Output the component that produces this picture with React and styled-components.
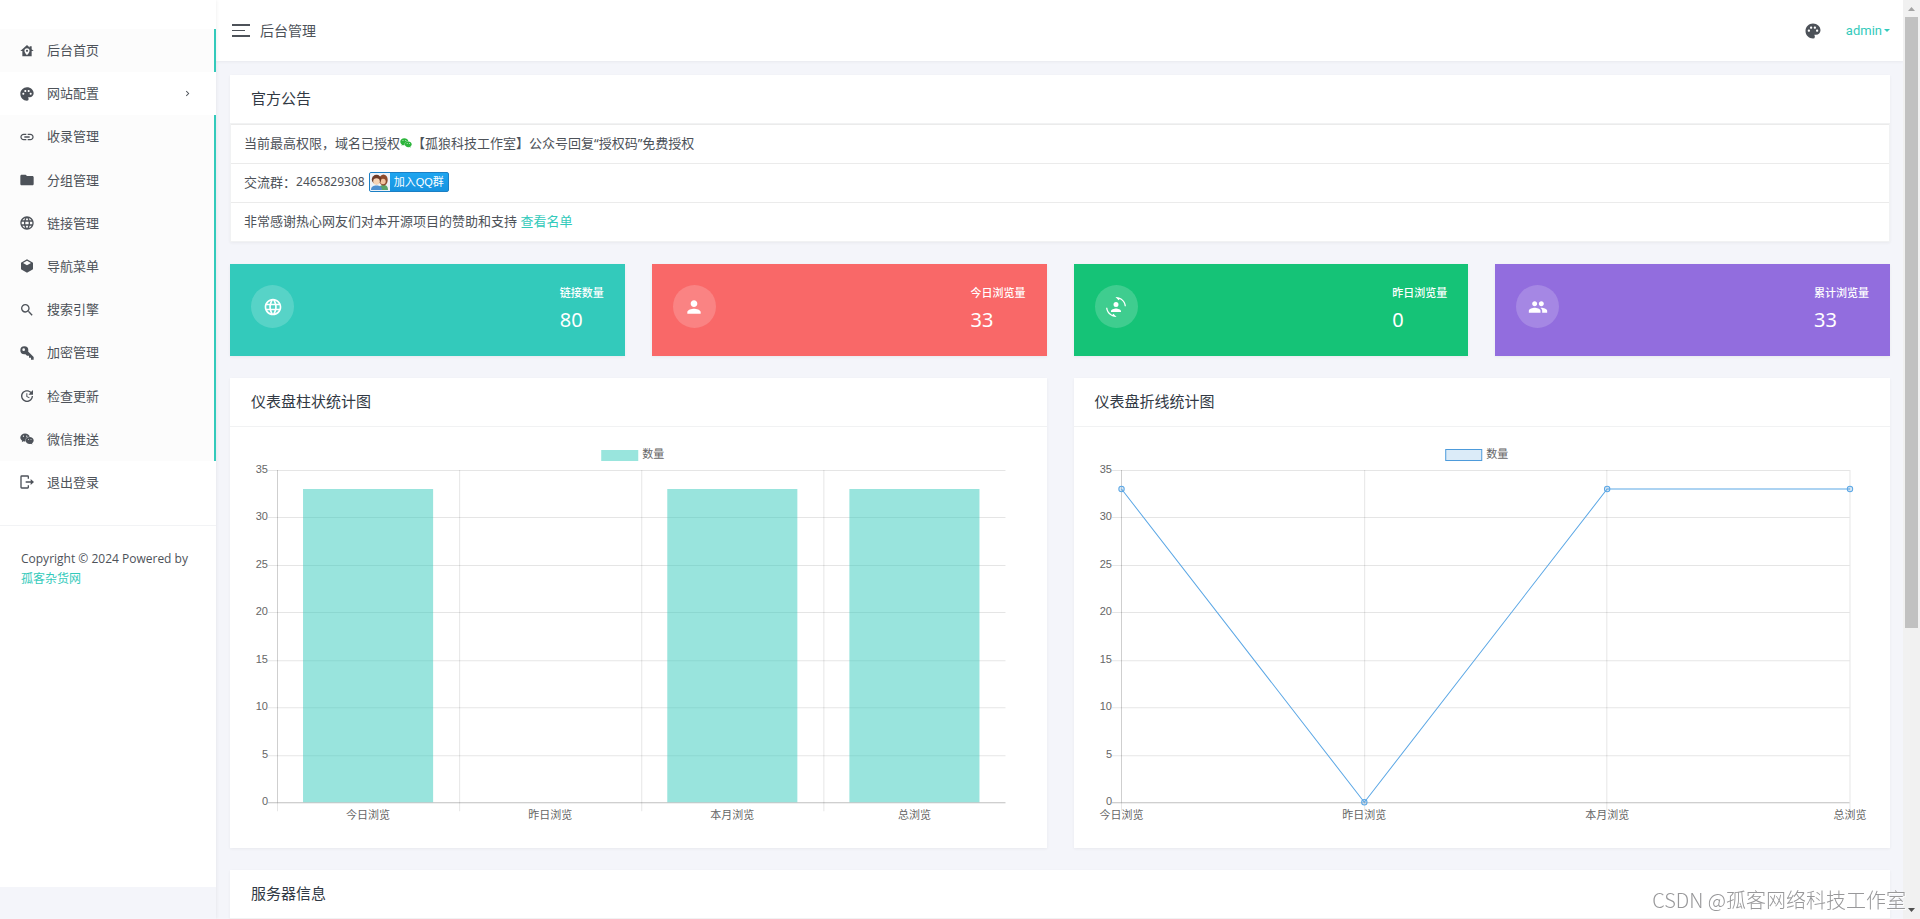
import React from 'react';
import styled, {createGlobalStyle} from 'styled-components';
import {
    MdChevronRight,
    MdFolder,
    MdLanguage,
    MdLink,
    MdPalette,
    MdPeople,
    MdPerson,
    MdSearch,
    MdUpdate
} from 'react-icons/md';
import {FaWeixin} from 'react-icons/fa';

const GlobalStyle = createGlobalStyle`
  * {
    box-sizing: border-box;
  }

  body {
    margin: 0;
    color: #4d5259;
    background-color: #f4f5fa;
    font-family: "Noto Sans", "Noto Sans CJK SC", sans-serif;
    font-size: 13px;
    line-height: 20px;
  }

  a {
    color: #33cabb;
    text-decoration: none;
  }
`

const Page = styled.div`
  display: flex;
  height: 100vh;
  overflow: hidden;
`

const Sidebar = styled.aside`
  display: flex;
  flex: none;
  width: 216px;
  padding-bottom: 32px;
  box-shadow: 0 0 4px rgba(0, 0, 0, 0.08);
  z-index: 2;
`

const SidebarInner = styled.div`
  flex: 1;
  padding-top: 29px;
  background-color: #fff;
`

const MenuList = styled.ul`
  display: grid;
  grid-auto-rows: 1fr;
  min-height: 475px;
  margin: 0;
  padding: 0;
  list-style: none;
`

const MenuLink = styled.a`
  display: flex;
  align-items: center;
  gap: 12px;
  height: 100%;
  padding: 0 21px 0 19px;
  color: #4d5259;
  background-color: ${({$active}) => $active ? '#fcfcfc' : '#fff'};
  border-right: 2px solid ${({$active}) => $active ? '#33cabb' : 'transparent'};
`

const MenuIcon = styled.span`
  display: flex;
  flex: none;
  justify-content: center;
  width: 16px;
`

const MenuText = styled.span`
  flex: 1;
  padding-bottom: 1px;
`

const Copyright = styled.p`
  margin: 21px 0 0;
  padding: 23px 21px;
  border-top: 1px solid #f2f3f5;
  font-family: "Open Sans", "Noto Sans CJK SC", sans-serif;
  font-size: 12px;
`

const Main = styled.div`
  display: flex;
  flex: 1;
  flex-direction: column;
  min-width: 0;
`

const Header = styled.header`
  display: flex;
  flex: none;
  align-items: center;
  gap: 10px;
  height: 61px;
  padding: 0 13px 0 16px;
  background-color: #fff;
  box-shadow: 0 1px 3px rgba(0, 0, 0, 0.05);
`

const Toggler = styled.button`
  display: flex;
  flex-direction: column;
  justify-content: space-between;
  width: 18px;
  height: 13px;
  padding: 0;
  border: 0;
  background: none;
`

const TogglerBar = styled.span`
  width: ${({$short}) => $short ? '13px' : '18px'};
  height: ${({$short}) => $short ? '1px' : '2px'};
  background-color: #4d5259;
`

const HeaderTitle = styled.span`
  flex: 1;
  font-size: 14px;
`

const SkinButton = styled.button`
  display: flex;
  padding: 0;
  border: 0;
  margin-right: 14px;
  color: #4d5259;
  background: none;
`

const UserLink = styled.a`
  display: flex;
  align-items: center;
  gap: 2px;
  font-family: Roboto, sans-serif;

  &::after {
    content: '';
    border-top: 3px solid;
    border-left: 3px solid transparent;
    border-right: 3px solid transparent;
  }
`

const Content = styled.main`
  display: flex;
  flex-direction: column;
  gap: 22px;
  padding: 14px 13px 0 14px;
`

const Card = styled.section`
  background-color: #fff;
  box-shadow: 0 1px 3px rgba(0, 0, 0, 0.05);
`

const CardTitle = styled.h4`
  margin: 0;
  padding: 13px 21px 15px;
  border-bottom: 1px solid #f1f2f3;
  color: #313944;
  font-size: 15px;
  font-weight: 400;
`

const Notices = styled.ul`
  margin: 0;
  padding: 0;
  border: 1px solid #f1f2f3;
  border-width: 0 1px 1px;
  list-style: none;
`

const Notice = styled.li`
  display: flex;
  align-items: center;
  height: 39px;
  padding: 0 13px 2px;
  border-top: 1px solid #ebebeb;
  white-space: pre;
`

const GroupNumber = styled.span`
  font-size: 12px;
`

const QQLink = styled.a`
  display: flex;
  align-items: center;
  height: 20px;
  margin-left: 4px;
  padding-right: 4px;
  gap: 4px;
  overflow: hidden;
  border: 1px solid #1b7fc4;
  border-radius: 2px;
  color: #fff;
  background: linear-gradient(#1ea5f0, #1793e0);
  font-family: "Liberation Sans", "Noto Sans CJK SC", sans-serif;
  font-size: 11px;
`

const Stats = styled.div`
  display: grid;
  grid-template-columns: repeat(4, 1fr);
  gap: 27px;
`

const StatCard = styled.div`
  display: flex;
  align-items: center;
  justify-content: space-between;
  height: 92px;
  padding: 0 21px 7px;
  color: #fff;
  background-color: ${({$color}) => $color};
  box-shadow: 0 1px 3px rgba(0, 0, 0, 0.05);
`

const StatIcon = styled.span`
  display: flex;
  align-items: center;
  justify-content: center;
  width: 43px;
  height: 43px;
  border-radius: 50%;
  background-color: rgba(255, 255, 255, 0.18);
`

const StatText = styled.div`
  padding-top: 3px;
`

const StatLabel = styled.p`
  margin: 0;
  font-size: 11px;
  font-weight: 500;
`

const StatValue = styled.p`
  margin: 0;
  padding-top: 3px;
  font-size: 20px;
  line-height: 28px;
`

const Charts = styled.div`
  display: grid;
  grid-template-columns: repeat(2, 1fr);
  gap: 27px;
`

const ChartBody = styled.div`
  padding: 17px 21px;
`

const ChartSvg = styled.svg`
  display: block;
  width: 100%;
  height: auto;
  overflow: visible;
  fill: #666;
  font-family: "Liberation Sans", "Noto Sans CJK SC", sans-serif;
  font-size: 11px;
`

const ScrollBar = styled.div`
  display: flex;
  flex: none;
  flex-direction: column;
  align-items: center;
  width: 17px;
  background-color: #f1f1f1;
`

const ScrollArrow = styled.svg`
  display: block;
  flex: none;
  width: 17px;
  height: 17px;
`

const ScrollTrack = styled.div`
  flex: 1;
`

const ScrollThumb = styled.div`
  width: 13px;
  height: 69%;
  background-color: #c1c1c1;
`

const Watermark = styled.div`
  position: fixed;
  right: 14px;
  bottom: 4px;
  color: #98989a;
  font-family: "Noto Sans CJK SC", sans-serif;
  font-size: 20px;
  font-weight: 300;
  line-height: 30px;
  text-shadow: 1px 1px 0 #fff;
  z-index: 5;
`

const Mdi = ({d, size = 16}) => (
    <svg width={size} height={size} viewBox="0 0 24 24" fill="currentColor" fillRule="evenodd" aria-hidden="true">
        <path d={d}/>
    </svg>
)

const paths = {
    home: 'M12,3L2,12H5V20H19V12H22L19,9.3V5H16V6.6L12,3M12,8A3.8,3.8 0 0,1 15.8,11.8C15.8,14.8 12,18.3 12,18.3C12,18.3 8.2,14.8 8.2,11.8A3.8,3.8 0 0,1 12,8M12,10.2A1.6,1.6 0 0,0 10.4,11.8A1.6,1.6 0 0,0 12,13.4A1.6,1.6 0 0,0 13.6,11.8A1.6,1.6 0 0,0 12,10.2Z',
    cube: 'M21,16.5C21,16.88 20.79,17.21 20.47,17.38L12.57,21.82C12.41,21.94 12.21,22 12,22C11.79,22 11.59,21.94 11.43,21.82L3.53,17.38C3.21,17.21 3,16.88 3,16.5V7.5C3,7.12 3.21,6.79 3.53,6.62L11.43,2.18C11.59,2.06 11.79,2 12,2C12.21,2 12.41,2.06 12.57,2.18L20.47,6.62C20.79,6.79 21,7.12 21,7.5V16.5M12,4.15L6.04,7.5L12,10.85L17.96,7.5L12,4.15Z',
    key: 'M22,18V22H18V19H15V16H12L9.74,13.74C9.19,13.91 8.61,14 8,14A6,6 0 0,1 2,8A6,6 0 0,1 8,2A6,6 0 0,1 14,8C14,8.61 13.91,9.19 13.74,9.74L22,18M7,5A2,2 0 0,0 5,7A2,2 0 0,0 7,9A2,2 0 0,0 9,7A2,2 0 0,0 7,5Z',
    logout: 'M4,2H13A2,2 0 0,1 15,4V7H13V4H4V20H13V17H15V20A2,2 0 0,1 13,22H4A2,2 0 0,1 2,20V4A2,2 0 0,1 4,2M10,10.8H17.5V7.5L22.5,12L17.5,16.5V13.2H10V10.8Z',
    convert: 'M7.5,21.5L8.85,20.16L12.66,23.97L12,24C5.71,24 0.56,19.16 0.05,13H1.55C1.91,16.76 4.25,19.94 7.5,21.5M16.5,2.5L15.15,3.84L11.34,0.03L12,0C18.29,0 23.44,4.84 23.95,11H22.45C22.09,7.24 19.75,4.07 16.5,2.5M6,17C6,15 10,13.9 12,13.9C14,13.9 18,15 18,17V18H6V17M15,9A3,3 0 0,1 12,12A3,3 0 0,1 9,9A3,3 0 0,1 12,6A3,3 0 0,1 15,9Z'
}

const menus = [
    {text: '后台首页', icon: <Mdi d={paths.home}/>, active: true},
    {text: '网站配置', icon: <MdPalette size={16}/>, sub: true},
    {text: '收录管理', icon: <MdLink size={16}/>, active: true},
    {text: '分组管理', icon: <MdFolder size={16}/>, active: true},
    {text: '链接管理', icon: <MdLanguage size={16}/>, active: true},
    {text: '导航菜单', icon: <Mdi d={paths.cube}/>, active: true},
    {text: '搜索引擎', icon: <MdSearch size={16}/>, active: true},
    {text: '加密管理', icon: <Mdi d={paths.key}/>, active: true},
    {text: '检查更新', icon: <MdUpdate size={16}/>, active: true},
    {text: '微信推送', icon: <FaWeixin size={14}/>, active: true},
    {text: '退出登录', icon: <Mdi d={paths.logout}/>}
]

const stats = [
    {label: '链接数量', value: 80, color: '#33cabb', icon: <MdLanguage size={20}/>},
    {label: '今日浏览量', value: 33, color: '#f96868', icon: <MdPerson size={20}/>},
    {label: '昨日浏览量', value: 0, color: '#15c377', icon: <Mdi d={paths.convert} size={20}/>},
    {label: '累计浏览量', value: 33, color: '#926dde', icon: <MdPeople size={20}/>}
]

const visits = [
    {name: '今日浏览', value: 33},
    {name: '昨日浏览', value: 0},
    {name: '本月浏览', value: 33},
    {name: '总浏览', value: 33}
]

const ticks = [0, 5, 10, 15, 20, 25, 30, 35]
const LEFT = 26
const RIGHT = 754
const TOP = 26
const BOTTOM = 358
const toY = (value) => BOTTOM - value / 35 * (BOTTOM - TOP)

function ChartAxes({columns}) {
    return (
        <g>
            {ticks.map(tick => (
                <g key={tick}>
                    <path
                        d={`M${LEFT - 9} ${Math.round(toY(tick)) + 0.5}H${RIGHT}`}
                        stroke={tick === 0 ? 'rgba(0,0,0,0.25)' : 'rgba(0,0,0,0.1)'}
                    />
                    <text x={LEFT - 9} y={toY(tick) + 3} textAnchor="end">{tick}</text>
                </g>
            ))}
            {columns.map(x => (
                <path key={x} d={`M${Math.round(x) + 0.5} ${TOP}V${BOTTOM + 9}`} stroke="rgba(0,0,0,0.1)"/>
            ))}
            <path d={`M${LEFT + 0.5} ${TOP}V${BOTTOM}`} stroke="rgba(0,0,0,0.1)"/>
        </g>
    )
}

function BarChart() {
    const step = (RIGHT - LEFT) / visits.length

    return (
        <ChartSvg viewBox="0 0 774 387" role="img" aria-label="仪表盘柱状统计图">
            <rect x="350" y="6" width="37" height="11" fill="#99e5dd"/>
            <text x="391" y="14">数量</text>
            <ChartAxes columns={[0, 1, 2, 3].map(i => LEFT + step * i)}/>
            {visits.map((item, i) => (
                <g key={item.name}>
                    <rect
                        x={LEFT + step * i + 26}
                        y={toY(item.value)}
                        width="130"
                        height={BOTTOM - toY(item.value)}
                        fill="rgba(51,202,187,0.5)"
                    />
                    <text x={LEFT + step * (i + 0.5)} y="375" textAnchor="middle">{item.name}</text>
                </g>
            ))}
        </ChartSvg>
    )
}

function LineChart() {
    const points = visits.map((item, i) => ({
        ...item,
        x: LEFT + 0.5 + (RIGHT - LEFT) / 3 * i,
        y: toY(item.value)
    }))

    return (
        <ChartSvg viewBox="0 0 774 387" role="img" aria-label="仪表盘折线统计图">
            <rect x="350.5" y="5.5" width="36" height="11" fill="#dbebf8" stroke="#4d9bdb"/>
            <text x="391" y="14">数量</text>
            <ChartAxes columns={points.map(p => p.x - 0.5)}/>
            <polyline points={points.map(p => `${p.x},${p.y}`).join(' ')} fill="none" stroke="#5ba7e5"/>
            {points.map(p => (
                <g key={p.name}>
                    <circle cx={p.x} cy={p.y} r="2.7" fill="rgba(72,152,218,0.2)" stroke="#5ba7e5"/>
                    <text x={p.x} y="375" textAnchor="middle">{p.name}</text>
                </g>
            ))}
        </ChartSvg>
    )
}

// two heads on a light plate, left part of the QQ group badge
const QQFaces = () => (
    <svg width="20" height="18" viewBox="0 0 20 18" aria-hidden="true">
        <rect width="20" height="18" fill="#eef2f8"/>
        <path d="M9 17C9 13 11 12 13.500 12S18 13 18 17Z" fill="#5aa469"/>
        <ellipse cx="13.500" cy="7" rx="4.200" ry="5.500" fill="#8d4b2c"/>
        <circle cx="13" cy="8.500" r="2.700" fill="#f3c4a0"/>
        <path d="M1 17C1 13.500 3.500 12.500 6.500 12.500S12 13.500 12 17Z" fill="#4f8fd0"/>
        <circle cx="6.500" cy="6.500" r="4.700" fill="#6e3b27"/>
        <circle cx="6.500" cy="8.500" r="3.300" fill="#f7d3b5"/>
    </svg>
)

function App() {
    return (
        <>
            <GlobalStyle/>
            <Page>
                <Sidebar>
                    <SidebarInner>
                        <nav>
                            <MenuList>
                                {menus.map(menu => (
                                    <li key={menu.text}>
                                        <MenuLink href="#" $active={menu.active}>
                                            <MenuIcon>{menu.icon}</MenuIcon>
                                            <MenuText>{menu.text}</MenuText>
                                            {menu.sub && <MdChevronRight size={11}/>}
                                        </MenuLink>
                                    </li>
                                ))}
                            </MenuList>
                        </nav>
                        <Copyright>
                            Copyright © 2024 Powered by <a href="#">孤客杂货网</a>
                        </Copyright>
                    </SidebarInner>
                </Sidebar>
                <Main>
                    <Header>
                        <Toggler aria-label="切换菜单">
                            <TogglerBar/>
                            <TogglerBar $short/>
                            <TogglerBar/>
                        </Toggler>
                        <HeaderTitle>后台管理</HeaderTitle>
                        <SkinButton aria-label="主题"><MdPalette size={18}/></SkinButton>
                        <UserLink href="#">admin</UserLink>
                    </Header>
                    <Content>
                        <Card>
                            <CardTitle>官方公告</CardTitle>
                            <Notices>
                                <Notice>
                                    当前最高权限，域名已授权<FaWeixin size={12} color="#2db53c"/>【孤狼科技工作室】公众号回复“授权码”免费授权
                                </Notice>
                                <Notice>
                                    交流群：<GroupNumber>2465829308</GroupNumber>
                                    <QQLink href="#"><QQFaces/>加入QQ群</QQLink>
                                </Notice>
                                <Notice>
                                    非常感谢热心网友们对本开源项目的赞助和支持 <a href="#">查看名单</a>
                                </Notice>
                            </Notices>
                        </Card>
                        <Stats>
                            {stats.map(stat => (
                                <StatCard key={stat.label} $color={stat.color}>
                                    <StatIcon>{stat.icon}</StatIcon>
                                    <StatText>
                                        <StatLabel>{stat.label}</StatLabel>
                                        <StatValue>{stat.value}</StatValue>
                                    </StatText>
                                </StatCard>
                            ))}
                        </Stats>
                        <Charts>
                            <Card>
                                <CardTitle>仪表盘柱状统计图</CardTitle>
                                <ChartBody><BarChart/></ChartBody>
                            </Card>
                            <Card>
                                <CardTitle>仪表盘折线统计图</CardTitle>
                                <ChartBody><LineChart/></ChartBody>
                            </Card>
                        </Charts>
                        <Card>
                            <CardTitle>服务器信息</CardTitle>
                        </Card>
                    </Content>
                </Main>
                <ScrollBar aria-hidden="true">
                    <ScrollArrow viewBox="0 0 17 17"><path d="M5 11L8.500 7L12 11Z" fill="#a3a3a3"/></ScrollArrow>
                    <ScrollTrack><ScrollThumb/></ScrollTrack>
                    <ScrollArrow viewBox="0 0 17 17"><path d="M5 6L8.500 10L12 6Z" fill="#505050"/></ScrollArrow>
                </ScrollBar>
            </Page>
            <Watermark>CSDN @孤客网络科技工作室</Watermark>
        </>
    )
}

export default App;
